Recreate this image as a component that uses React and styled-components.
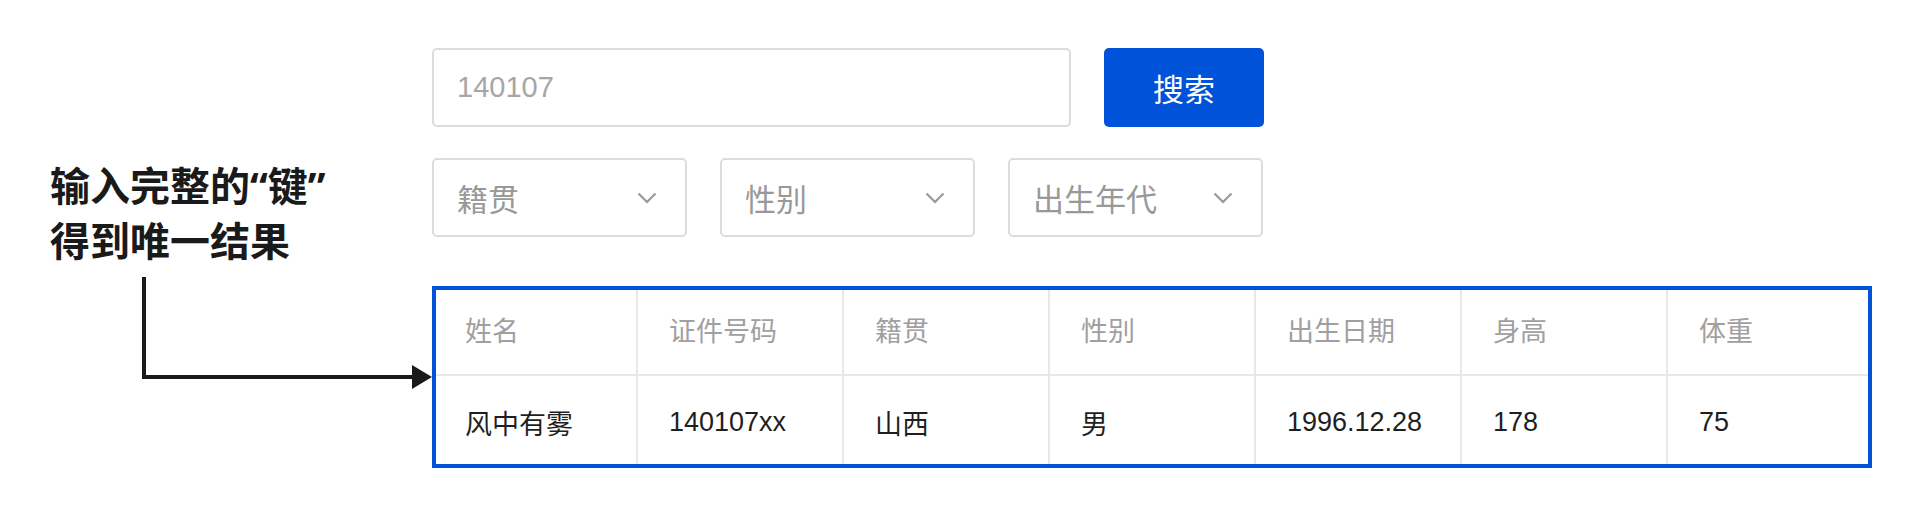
import React from 'react';
import styled, { createGlobalStyle } from 'styled-components';

const GlobalStyle = createGlobalStyle`
  body {
    margin: 0;
    background: #fff;
    font-family: "Liberation Sans", "Noto Sans CJK SC", sans-serif;
  }
`;

const Page = styled.div`
  display: flex;
  width: 1920px;
  height: 518px;
  background: #fff;
`;

const Side = styled.div`
  width: 432px;
  flex-shrink: 0;
  padding-top: 158px;
  box-sizing: border-box;
`;

const Note = styled.div`
  padding-left: 50px;
  font-family: "Noto Sans", "Noto Sans CJK SC", sans-serif;
  font-size: 40px;
  line-height: 55px;
  font-weight: 700;
  color: #1a1a1a;
`;

const Connector = styled.svg`
  display: block;
`;

const Main = styled.div`
  width: 1440px;
  padding-top: 48px;
  display: flex;
  flex-direction: column;
  gap: 31px;
`;

const Row = styled.div`
  display: flex;
  gap: 33px;
`;

const SearchInput = styled.input`
  width: 639px;
  height: 79px;
  box-sizing: border-box;
  border: 2px solid #dcdcdc;
  border-radius: 5px;
  padding: 0 23px;
  font-family: inherit;
  font-size: 29px;
  color: #222;
  outline: none;
  &::placeholder {
    color: #a6a6a6;
  }
`;

const SearchButton = styled.button`
  width: 160px;
  height: 79px;
  border: 0;
  border-radius: 5px;
  background: #0052d9;
  color: #fff;
  font-family: inherit;
  font-size: 31px;
  cursor: pointer;
`;

const Select = styled.div`
  width: 255px;
  height: 79px;
  box-sizing: border-box;
  border: 2px solid #dcdcdc;
  border-radius: 5px;
  padding: 0 28px 0 23px;
  display: flex;
  align-items: center;
  justify-content: space-between;
  font-size: 31px;
  color: #999;
`;

const Table = styled.table`
  width: 1440px;
  margin-top: 18px;
  border: 4px solid #0052d9;
  border-spacing: 0;
  table-layout: fixed;
  font-size: 27px;
`;

const Col = styled.col`
  width: ${(p) => p.$w}px;
`;

const Cell = styled.td`
  height: ${(p) => (p.$head ? 86 : 88)}px;
  box-sizing: border-box;
  padding: ${(p) => (p.$head ? '0 0 5px 31px' : '5px 0 0 31px')};
  text-align: left;
  font-weight: 400;
  color: ${(p) => (p.$head ? '#a0a0a0' : '#1f1f1f')};
  border-right: 2px solid #e7e7e7;
  border-bottom: ${(p) => (p.$head ? '2px solid #e7e7e7' : '0')};
  &:first-child {
    padding-left: 29px;
  }
  &:last-child {
    border-right: 0;
  }
`;

const Chevron = () => (
  <svg width="20" height="12" viewBox="0 0 20 12">
    <polyline points="1.5,1.5 10,10 18.5,1.5" fill="none" stroke="#999" strokeWidth="2.2" />
  </svg>
);

const heads = ['姓名', '证件号码', '籍贯', '性别', '出生日期', '身高', '体重'];
const person = ['风中有雾', '140107xx', '山西', '男', '1996.12.28', '178', '75'];
const widths = [202, 206, 206, 206, 206, 206, 200];

export default function App() {
  return (
    <Page>
      <GlobalStyle />
      <Side>
        <Note>
          输入完整的“键”
          <br />
          得到唯一结果
        </Note>
        <Connector width="432" height="125" viewBox="0 0 432 125">
          <line x1="144" y1="9" x2="144" y2="111" stroke="#1a1a1a" strokeWidth="4" />
          <line x1="142" y1="109" x2="414" y2="109" stroke="#1a1a1a" strokeWidth="4" />
          <polygon points="412,97 432,109 412,121" fill="#1a1a1a" />
        </Connector>
      </Side>
      <Main>
        <Row>
          <SearchInput placeholder="140107" />
          <SearchButton>搜索</SearchButton>
        </Row>
        <Row>
          {['籍贯', '性别', '出生年代'].map((s) => (
            <Select key={s}>
              <span>{s}</span>
              <Chevron />
            </Select>
          ))}
        </Row>
        <Table>
          <colgroup>
            {widths.map((w, i) => (
              <Col key={i} $w={w} />
            ))}
          </colgroup>
          <thead>
            <tr>
              {heads.map((h) => (
                <Cell as="th" $head key={h}>{h}</Cell>
              ))}
            </tr>
          </thead>
          <tbody>
            <tr>
              {person.map((v) => (
                <Cell key={v}>{v}</Cell>
              ))}
            </tr>
          </tbody>
        </Table>
      </Main>
    </Page>
  );
}
